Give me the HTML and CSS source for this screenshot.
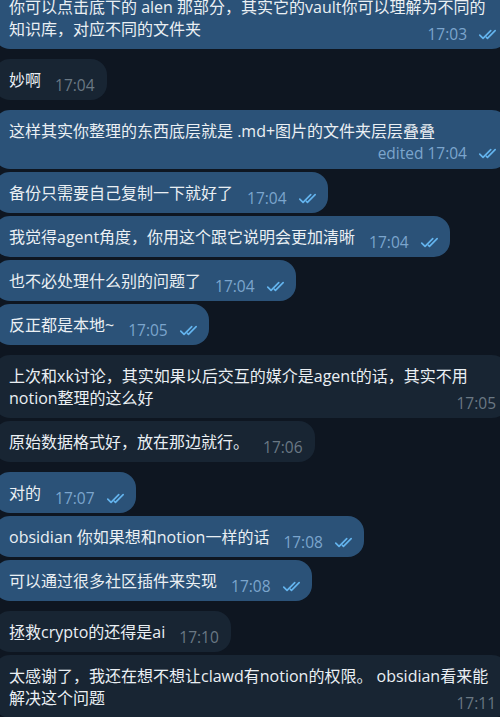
FILE: index.html
```html
<!DOCTYPE html>
<html lang="zh-CN">
<head>
  <meta charset="utf-8" />
  <meta name="viewport" content="width=device-width, initial-scale=1" />
  <title>Chat</title>
  <link rel="stylesheet" href="styles.css">
</head>
<body>
  <div class="chat">

    <div class="group out">
      <div class="bubble">你可以点击底下的 alen 那部分，其实它的vault你可以理解为不同的知识库，对应不同的文件夹<span class="meta"><span class="time">17:03</span><svg class="check" viewBox="0 0 18 10"><path d="M1.5 5.5l3 3 7-7"/><path d="M7.5 7.5l1 1 7-7"/></svg></span></div>
    </div>

    <div class="group in">
      <div class="bubble">妙啊<span class="meta"><span class="time">17:04</span></span></div>
    </div>

    <div class="group out">
      <div class="bubble edited">这样其实你整理的东西底层就是 .md+图片的文件夹层层叠叠<span class="meta"><span class="time">edited 17:04</span><svg class="check" viewBox="0 0 18 10"><path d="M1.5 5.5l3 3 7-7"/><path d="M7.5 7.5l1 1 7-7"/></svg></span></div>
      <div class="bubble">备份只需要自己复制一下就好了<span class="meta"><span class="time">17:04</span><svg class="check" viewBox="0 0 18 10"><path d="M1.5 5.5l3 3 7-7"/><path d="M7.5 7.5l1 1 7-7"/></svg></span></div>
      <div class="bubble">我觉得agent角度，你用这个跟它说明会更加清晰<span class="meta"><span class="time">17:04</span><svg class="check" viewBox="0 0 18 10"><path d="M1.5 5.5l3 3 7-7"/><path d="M7.5 7.5l1 1 7-7"/></svg></span></div>
      <div class="bubble">也不必处理什么别的问题了<span class="meta"><span class="time">17:04</span><svg class="check" viewBox="0 0 18 10"><path d="M1.5 5.5l3 3 7-7"/><path d="M7.5 7.5l1 1 7-7"/></svg></span></div>
      <div class="bubble">反正都是本地~<span class="meta"><span class="time">17:05</span><svg class="check" viewBox="0 0 18 10"><path d="M1.5 5.5l3 3 7-7"/><path d="M7.5 7.5l1 1 7-7"/></svg></span></div>
    </div>

    <div class="group in">
      <div class="bubble">上次和xk讨论，其实如果以后交互的媒介是agent的话，其实不用notion整理的这么好<span class="meta"><span class="time">17:05</span></span></div>
      <div class="bubble">原始数据格式好，放在那边就行。<span class="meta"><span class="time">17:06</span></span></div>
    </div>

    <div class="group out">
      <div class="bubble">对的<span class="meta"><span class="time">17:07</span><svg class="check" viewBox="0 0 18 10"><path d="M1.5 5.5l3 3 7-7"/><path d="M7.5 7.5l1 1 7-7"/></svg></span></div>
      <div class="bubble">obsidian 你如果想和notion一样的话<span class="meta"><span class="time">17:08</span><svg class="check" viewBox="0 0 18 10"><path d="M1.5 5.5l3 3 7-7"/><path d="M7.5 7.5l1 1 7-7"/></svg></span></div>
      <div class="bubble">可以通过很多社区插件来实现<span class="meta"><span class="time">17:08</span><svg class="check" viewBox="0 0 18 10"><path d="M1.5 5.5l3 3 7-7"/><path d="M7.5 7.5l1 1 7-7"/></svg></span></div>
    </div>

    <div class="group in">
      <div class="bubble">拯救crypto的还得是ai<span class="meta"><span class="time">17:10</span></span></div>
      <div class="bubble">太感谢了，我还在想不想让clawd有notion的权限。 obsidian看来能解决这个问题<span class="meta"><span class="time">17:11</span></span></div>
    </div>

  </div>
</body>
</html>
```

FILE: styles.css
```css
html,
body {
  overflow: hidden;
}
body {
  margin: 0;
  background: #0e1621;
  color: #eaeff3;
  font-family: "Open Sans", "Noto Sans CJK SC", sans-serif;
  font-size: 16px;
  line-height: 22px;
}
.chat {
  display: flex;
  flex-direction: column;
  width: 514px;
  margin: -14px 0 0 -6px;
}
.group {
  display: flex;
  flex-direction: column;
  align-items: flex-start;
  gap: 3px;
  margin-bottom: 10px;
}
.bubble {
  box-sizing: border-box;
  max-width: 100%;
  padding: 10px 10px 9px 15px;
  border-radius: 16px;
}
.out .bubble {
  background: #2b5278;
}
.in .bubble {
  background: #182533;
  padding-right: 12px;
}
.meta {
  float: right;
  display: flex;
  align-items: center;
  gap: 11px;
  margin: 7px 0 -7px 14px;
  line-height: 18px;
  font-size: 15.5px;
}
.bubble.edited .meta {
  margin-top: 2px;
  margin-bottom: -2px;
}
.out .time {
  color: #7ba5cd;
}
.in .time {
  color: #6a7884;
}
.check {
  width: 20px;
  height: 11px;
  fill: none;
  stroke: #64b4ee;
  stroke-width: 1.5;
  stroke-linecap: round;
  stroke-linejoin: round;
}
```
